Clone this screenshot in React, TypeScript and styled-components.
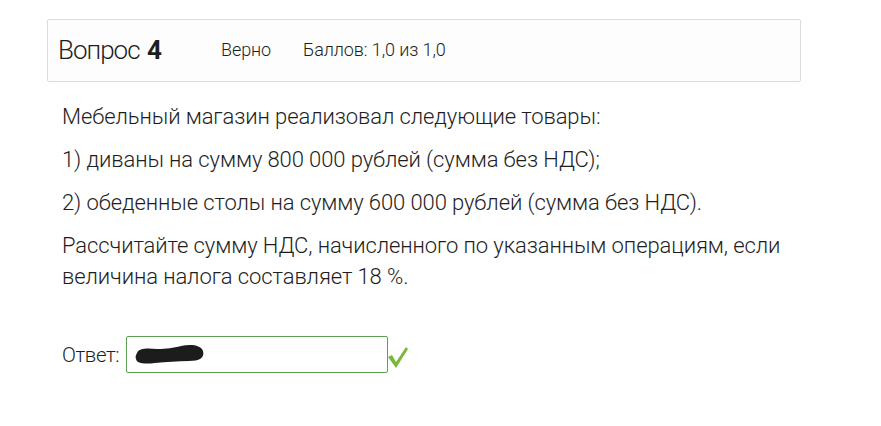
import styled, { createGlobalStyle } from "styled-components";

const GlobalStyle = createGlobalStyle`
  html, body { margin: 0; padding: 0; background: #fff; }
  body { font-family: Roboto, "Noto Sans", sans-serif; color: #1e1e1e; }
`;

const Page = styled.div`
  width: 881px;
  height: 426px;
  padding: 19px 0 0 47px;
  box-sizing: border-box;
`;

const InfoBox = styled.div`
  display: flex;
  align-items: center;
  width: 754px;
  height: 63px;
  box-sizing: border-box;
  padding: 0 0 2px 10px;
  border: 1px solid #dcdcdc;
  border-radius: 2px;
  background: #fdfdfd;
`;

const Title = styled.h3`
  margin: 0;
  font-size: 26px;
  font-weight: 300;
  letter-spacing: -1px;
  width: 163px;
  b { font-weight: 700; margin-left: 2px; }
`;

const State = styled.span`
  font-size: 18px;
  font-weight: 300;
  letter-spacing: -0.1px;
  margin-right: 32px;
`;

const Content = styled.div`
  padding: 19px 0 0 15px;
`;

const Para = styled.p`
  margin: 0 0 12px;
  font-size: 22px;
  font-weight: 300;
  line-height: 31px;
  letter-spacing: -0.1px;
  max-width: 740px;
`;

const AnswerRow = styled.div`
  display: flex;
  align-items: center;
  margin-top: 44px;
  gap: 7px;
`;

const Label = styled.span`
  font-size: 20.5px;
  font-weight: 300;
  letter-spacing: -0.4px;
`;

const Field = styled.div`
  position: relative;
  width: 262px;
  height: 37px;
  box-sizing: border-box;
  border: 1px solid #5f9e55;
  border-radius: 2px;
  background: #fff;
`;

const Blot = styled.svg`
  position: absolute;
  left: 6px;
  top: 6px;
`;

const Check = styled.svg`
  margin-left: -8px;
  margin-top: 4px;
`;

export default function App() {
  return (
    <>
      <GlobalStyle />
      <Page>
        <InfoBox>
          <Title>
            Вопрос <b>4</b>
          </Title>
          <State>Верно</State>
          <State>Баллов: 1,0 из 1,0</State>
        </InfoBox>
        <Content>
          <Para>Мебельный магазин реализовал следующие товары:</Para>
          <Para>1) диваны на сумму 800 000 рублей (сумма без НДС);</Para>
          <Para>2) обеденные столы на сумму 600 000 рублей (сумма без НДС).</Para>
          <Para>
            Рассчитайте сумму НДС, начисленного по указанным операциям, если
            величина налога составляет 18 %.
          </Para>
          <AnswerRow>
            <Label>Ответ:</Label>
            <Field>
              <Blot width="72" height="24" viewBox="0 0 72 24">
                <path
                  d="M4 10 C6 5 14 5 24 6 C34 6 40 5 48 3 C58 1 68 2 70 8 C72 15 66 18 56 18 C44 18 34 19 22 20 C12 21 4 21 3 16 C2 14 3 12 4 10 Z"
                  fill="#1c1c1c"
                />
              </Blot>
            </Field>
            <Check width="22" height="24" viewBox="0 0 22 24">
              <path d="M1 12 L5 10 L9 17 L19 2 L21 4 L9 23 Z" fill="#7ab83a" />
            </Check>
          </AnswerRow>
        </Content>
      </Page>
    </>
  );
}
